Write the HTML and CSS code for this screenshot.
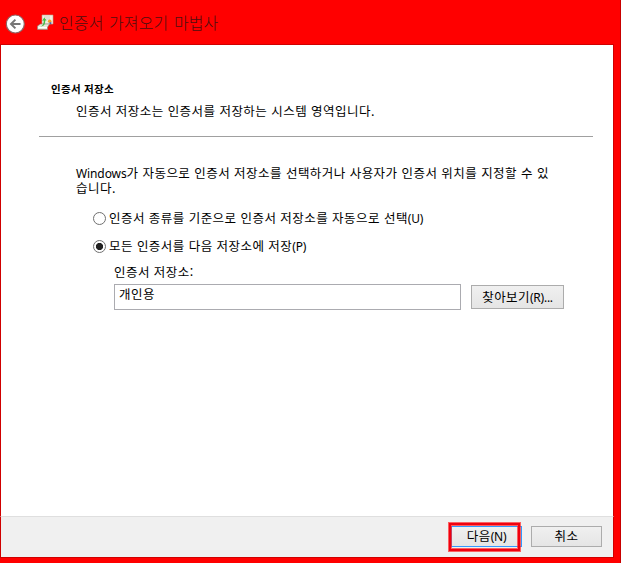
FILE: index.html
```
<!DOCTYPE html>
<html lang="ko">
<head>
<meta charset="utf-8">
<title>인증서 가져오기 마법사</title>
<link rel="stylesheet" href="styles.css">
</head>
<body>
<div class="window">
  <header class="titlebar">
    <svg class="back" width="20" height="20" viewBox="0 0 20 20">
      <circle cx="10.3" cy="10" r="9" fill="#fff" stroke="#8c6666" stroke-width="1.2"/>
      <path d="M15.5 10H6.5M10.4 5.6L6 10l4.4 4.4" fill="none" stroke="#777" stroke-width="2"/>
    </svg>
    <svg class="cert" width="17" height="17" viewBox="0 0 17 17">
      <path d="M5 1h11v9H5z" fill="#f3eee2" stroke="#b8a68e" stroke-width=".6"/>
      <path d="M7 3h6M9 5h4" stroke="#c9c2c0" stroke-width=".8"/>
      <path d="M0.5 12l3-2h9l-2 3.2v2.3h-10z" fill="#e9e7d9" stroke="#8e8175" stroke-width=".6"/>
      <path d="M1.5 13.5H10" stroke="#fff"/>
      <path d="M3.5 12.5c3-1 3.2-4 3.2-6L5.2 6.7 7.3 3.5 9.6 6.5H8.3c0 3-1 6-4.8 6z" fill="#43bd45"/>
      <circle cx="12.7" cy="7.2" r="1.8" fill="#eda32c"/>
      <path d="M11.8 9l2.5-1v2.5z" fill="#385fb5"/>
    </svg>
    <h1>인증서 가져오기 마법사</h1>
  </header>
  <main class="page">
    <section class="heading">
      <h2>인증서 저장소</h2>
      <p>인증서 저장소는 인증서를 저장하는 시스템 영역입니다.</p>
    </section>
    <section class="body">
      <p class="intro"><span class="latin win">Windows</span>가 자동으로 인증서 저장소를 선택하거나 사용자가 인증서 위치를 지정할 수 있<br>습니다.</p>
      <div class="option"><i class="radio"></i><span>인증서 종류를 기준으로 인증서 저장소를 자동으로 선택<span class="latin">(U)</span></span></div>
      <div class="option second"><i class="radio checked"></i><span>모든 인증서를 다음 저장소에 저장<span class="latin">(P)</span></span></div>
      <div class="label">인증서 저장소:</div>
      <div class="row">
        <div class="field">개인용</div>
        <div class="button browse"><span>찾아보기<span class="latin">(R)...</span></span></div>
      </div>
    </section>
  </main>
  <footer class="footer">
    <div class="focus"><div class="button next"><span>다음<span class="latin">(N)</span></span></div></div>
    <div class="button cancel"><span>취소</span></div>
  </footer>
</div>
</body>
</html>
```
FILE: styles.css
```
* { box-sizing: border-box; }
body { margin: 0; }
h1, h2, p { margin: 0; font-weight: normal; }
.window {
  width: 621px;
  height: 563px;
  background: #f00;
  border-right: 1px solid #c80000;
  padding-right: 6px;
  display: flex;
  flex-direction: column;
  font: 12.5px/15px "Noto Sans CJK KR", sans-serif;
  letter-spacing: .46px;
  color: #000;
  white-space: nowrap;
  overflow: hidden;
}
.latin { font-family: "Noto Sans", sans-serif; font-size: 12px; letter-spacing: -.25px; line-height: 1; }
.win { letter-spacing: -.1px; }
.titlebar {
  height: 45px;
  padding-left: 5px;
  display: flex;
  align-items: flex-start;
  border-bottom: 1px solid #d00000;
}
.back { margin-top: 14px; }
.cert { margin: 14px 0 0 12px; }
.titlebar h1 { margin: 11px 0 0 5px; font-size: 16px; line-height: 22px; color: #4c1010; font-weight: 300; letter-spacing: .1px; word-spacing: 1px; }
.page {
  height: 471px;
  background: #fff;
  border-left: 1px solid #d00000;
  border-right: 1px solid #d00000;
  padding: 36px 20px 0 38px;
}
.heading { height: 56px; border-bottom: 1px solid #a0a0a0; padding-left: 12px; }
.heading h2 { font-size: 10.5px; line-height: 15px; font-weight: 700; letter-spacing: .3px; }
.heading p { margin: 7px 0 0 25px; }
.body { padding: 28px 0 0 37px; }
.intro { height: 30px; }
.option { display: flex; align-items: center; height: 15px; margin: 16px 0 0 17px; }
.option > span { position: relative; top: -1px; }
.option.second { margin-top: 13px; }
.radio { width: 13px; height: 13px; border: 1px solid #707070; border-radius: 50%; margin-right: 3px; background: #fff; }
.checked { background: radial-gradient(circle, #222 0 3.2px, #fff 4px); }
.label { margin: 10px 0 0 38px; }
.row { display: flex; margin: 5px 0 0 38px; gap: 10px; }
.field { width: 347px; height: 26px; border: 1px solid #ababb0; padding: 1px 4px; background: #fff; }
.button {
  height: 24px;
  border: 1px solid #acacac;
  background: linear-gradient(#f0f0f0, #e5e5e5);
  display: flex;
  align-items: center;
  justify-content: center;
  padding-bottom: 2px;
}
.browse { width: 93px; margin-top: 1px; }
.footer {
  height: 41px;
  background: #f0f0f0;
  border-top: 1px solid #dfdfdf;
  border-left: 1px solid #d00000;
  border-right: 1px solid #d00000;
  box-shadow: 0 1px #d00000;
  display: flex;
  justify-content: flex-end;
  padding: 5px 11px 0 0;
}
.focus { position: relative; width: 73px; padding: 4px 0 0 2px; margin-right: 9px; }
.focus::after {
  content: "";
  box-sizing: border-box;
  position: absolute;
  left: 0;
  top: 1px;
  width: 71px;
  height: 28px;
  border: 2px solid #f00010;
  box-shadow: 0 0 0 1px #ff2020b0, inset 0 0 0 1px #ff2020b0;
}
.next { height: 21px; width: 71px; border-color: #3399ff; }
.cancel { width: 71px; height: 21px; margin-top: 4px; }
```
